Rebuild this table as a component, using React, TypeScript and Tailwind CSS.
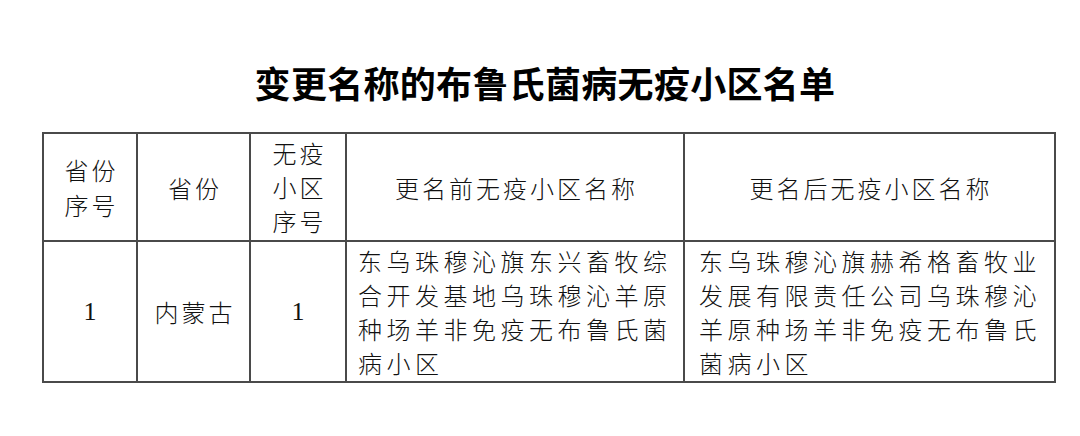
import React from "react";

const cjk = { fontFamily: '"Noto Sans CJK SC", "Noto Sans", sans-serif' };
const serif = { fontFamily: '"Liberation Serif", "Noto Sans CJK SC", serif' };

export default function App() {
  const cell = "border-2 border-[#4a4a4a] p-0 align-middle text-center";
  return (
    <div className="w-[1080px] h-[436px] bg-white text-[#111]" style={cjk}>
      <div className="pt-[64px] h-[132px] pl-[10px]">
        <h1 className="text-center text-[36px] leading-[36px] font-bold tracking-[0.3px] text-black">
          变更名称的布鲁氏菌病无疫小区名单
        </h1>
      </div>
      <table className="ml-[42px] w-[1012px] table-fixed border-collapse">
        <colgroup>
          <col className="w-[94px]" />
          <col className="w-[113px]" />
          <col className="w-[96px]" />
          <col className="w-[338px]" />
          <col className="w-[371px]" />
        </colgroup>
        <tbody>
          <tr className="h-[108px]">
            <td className={cell}>
              <div className="text-[24px] leading-[35px] font-light tracking-[3px] pl-[3px]">
                <div>省份</div>
                <div>序号</div>
              </div>
            </td>
            <td className={cell}>
              <div className="text-[24px] leading-[35px] font-light tracking-[3px] pl-[3px]">省份</div>
            </td>
            <td className={cell}>
              <div className="text-[24px] leading-[34px] font-light tracking-[3px] pl-[3px]">
                <div>无疫</div>
                <div>小区</div>
                <div>序号</div>
              </div>
            </td>
            <td className={cell}>
              <div className="text-[24px] leading-[35px] font-light tracking-[3px] pl-[3px]">更名前无疫小区名称</div>
            </td>
            <td className={cell}>
              <div className="text-[24px] leading-[35px] font-light tracking-[3px] pl-[3px]">更名后无疫小区名称</div>
            </td>
          </tr>
          <tr className="h-[141px]">
            <td className={cell}>
              <div className="text-[26px] leading-[35px]" style={serif}>1</div>
            </td>
            <td className={cell}>
              <div className="text-[24px] leading-[35px] font-light tracking-[3px] pl-[3px]">内蒙古</div>
            </td>
            <td className={cell}>
              <div className="text-[26px] leading-[35px]" style={serif}>1</div>
            </td>
            <td className="border-2 border-[#4a4a4a] p-0 align-middle">
              <div className="pl-[11px] text-[24px] leading-[34px] font-light tracking-[4.5px] whitespace-nowrap">
                <div>东乌珠穆沁旗东兴畜牧综</div>
                <div>合开发基地乌珠穆沁羊原</div>
                <div>种场羊非免疫无布鲁氏菌</div>
                <div>病小区</div>
              </div>
            </td>
            <td className="border-2 border-[#4a4a4a] p-0 align-middle">
              <div className="pl-[14px] text-[24px] leading-[34px] font-light tracking-[4.5px] whitespace-nowrap">
                <div>东乌珠穆沁旗赫希格畜牧业</div>
                <div>发展有限责任公司乌珠穆沁</div>
                <div>羊原种场羊非免疫无布鲁氏</div>
                <div>菌病小区</div>
              </div>
            </td>
          </tr>
        </tbody>
      </table>
    </div>
  );
}
